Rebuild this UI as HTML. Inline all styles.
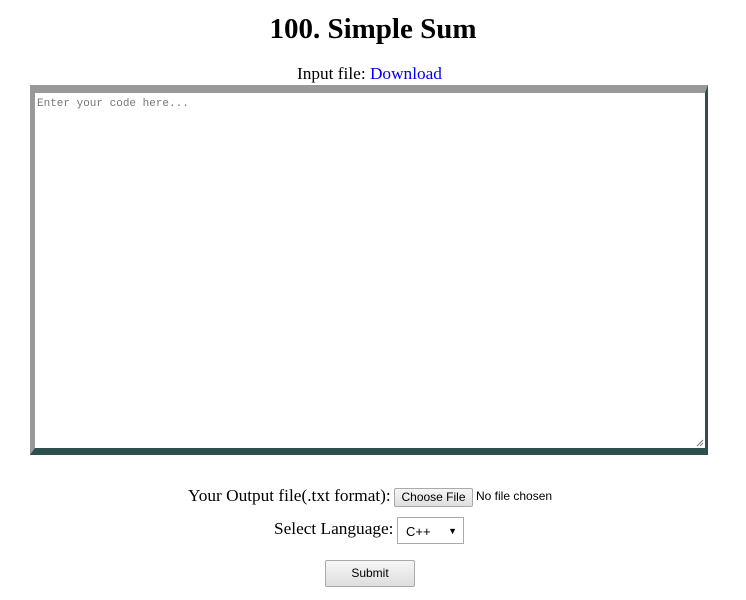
<!DOCTYPE html>
<html><head><style>
body{margin:0;width:746px;height:600px;background:#fff;font-family:"Liberation Serif",serif;position:relative;overflow:hidden}
.a{position:absolute;white-space:nowrap}
h1{position:absolute;top:13px;left:0;width:746px;text-align:center;margin:0;font-size:29px;font-weight:bold}
.ta{position:absolute;left:30px;top:85px;width:670px;height:355px;border-style:solid;border-color:#999 #2f4f4f #2f4f4f #999;border-width:8px 3px 7px 5px;background:#fff}
.ph{position:absolute;left:2px;top:5px;font-family:"Liberation Mono",monospace;font-size:11px;color:#777}
.btn{font-family:"Liberation Sans",sans-serif;font-size:12px;border:1px solid #aaa;border-radius:2px;background:linear-gradient(#f6f6f6,#dedede);box-sizing:border-box;text-align:center}
</style></head><body>
<h1>100. Simple Sum</h1>
<div class="a" style="top:64px;left:297px;font-size:17.3px">Input file: <span style="color:#00e">Download</span></div>
<div class="ta"><div class="ph">Enter your code here...</div>
<svg style="position:absolute;right:1px;bottom:1px" width="8" height="8"><path d="M7 1L1 7M7 4L4 7" stroke="#777" stroke-width="1"/></svg></div>
<div class="a" style="top:486px;left:188px;font-size:17.3px">Your Output file(.txt format):</div>
<div class="a btn" style="left:394px;top:488px;width:79px;height:19px;line-height:17px">Choose File</div>
<div class="a" style="left:476px;top:489px;font-family:'Liberation Sans',sans-serif;font-size:12px">No file chosen</div>
<div class="a" style="top:519px;left:274px;font-size:17.3px">Select Language:</div>
<div class="a" style="left:397px;top:517px;width:67px;height:27px;border:1px solid #aaa;box-sizing:border-box;font-family:'Liberation Sans',sans-serif;font-size:13px;line-height:27px;padding-left:8px">C++<span style="position:absolute;right:6px;top:0;font-size:9px">▼</span></div>
<div class="a btn" style="left:325px;top:560px;width:90px;height:27px;line-height:25px">Submit</div>
</body></html>
